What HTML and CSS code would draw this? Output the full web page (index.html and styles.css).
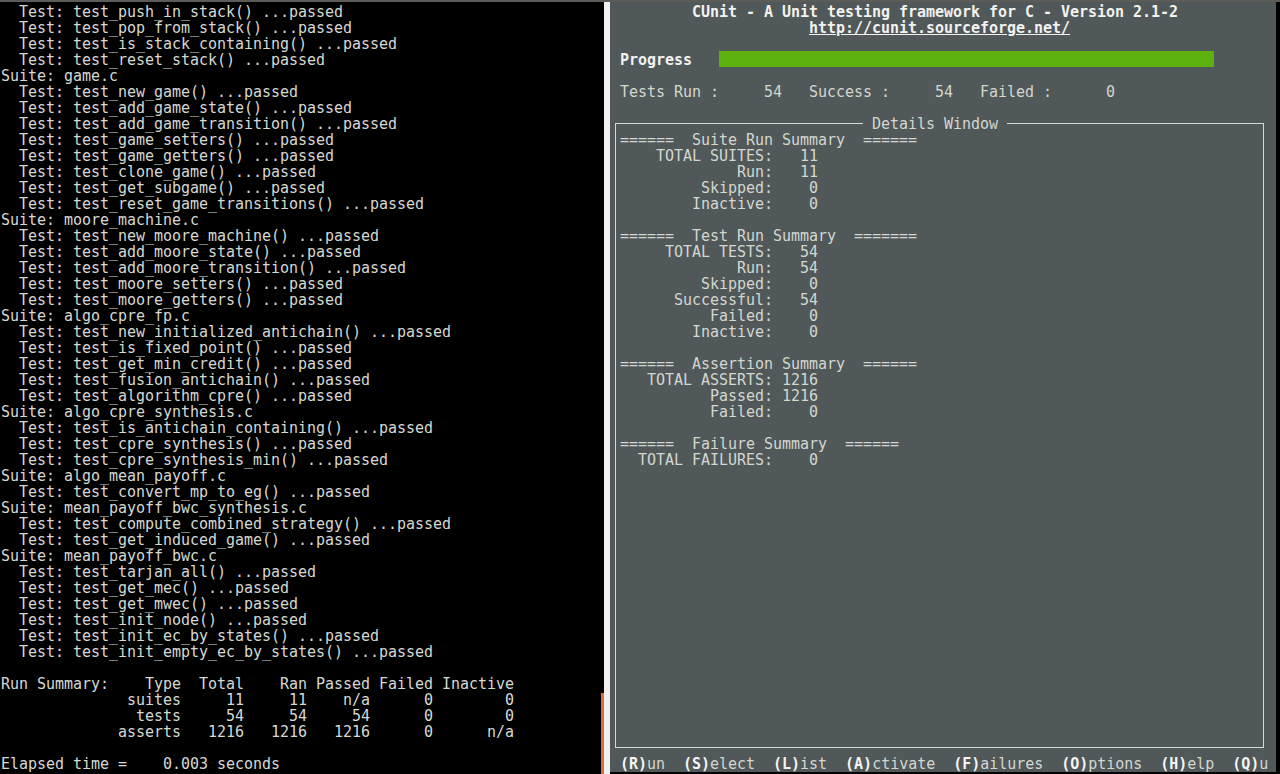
FILE: index.html
```html
<!DOCTYPE html>
<html>
<head>
<meta charset="utf-8">
<title>CUnit</title>
<link rel="stylesheet" href="styles.css">
</head>
<body>
<div class="topbar"></div>
<div class="main">
  <div class="left">
<pre class="term">  Test: test_push_in_stack() ...passed
  Test: test_pop_from_stack() ...passed
  Test: test_is_stack_containing() ...passed
  Test: test_reset_stack() ...passed
Suite: game.c
  Test: test_new_game() ...passed
  Test: test_add_game_state() ...passed
  Test: test_add_game_transition() ...passed
  Test: test_game_setters() ...passed
  Test: test_game_getters() ...passed
  Test: test_clone_game() ...passed
  Test: test_get_subgame() ...passed
  Test: test_reset_game_transitions() ...passed
Suite: moore_machine.c
  Test: test_new_moore_machine() ...passed
  Test: test_add_moore_state() ...passed
  Test: test_add_moore_transition() ...passed
  Test: test_moore_setters() ...passed
  Test: test_moore_getters() ...passed
Suite: algo_cpre_fp.c
  Test: test_new_initialized_antichain() ...passed
  Test: test_is_fixed_point() ...passed
  Test: test_get_min_credit() ...passed
  Test: test_fusion_antichain() ...passed
  Test: test_algorithm_cpre() ...passed
Suite: algo_cpre_synthesis.c
  Test: test_is_antichain_containing() ...passed
  Test: test_cpre_synthesis() ...passed
  Test: test_cpre_synthesis_min() ...passed
Suite: algo_mean_payoff.c
  Test: test_convert_mp_to_eg() ...passed
Suite: mean_payoff_bwc_synthesis.c
  Test: test_compute_combined_strategy() ...passed
  Test: test_get_induced_game() ...passed
Suite: mean_payoff_bwc.c
  Test: test_tarjan_all() ...passed
  Test: test_get_mec() ...passed
  Test: test_get_mwec() ...passed
  Test: test_init_node() ...passed
  Test: test_init_ec_by_states() ...passed
  Test: test_init_empty_ec_by_states() ...passed

Run Summary:    Type  Total    Ran Passed Failed Inactive
              suites     11     11    n/a      0        0
               tests     54     54     54      0        0
             asserts   1216   1216   1216      0      n/a

Elapsed time =    0.003 seconds</pre>
  </div>
  <div class="scroll"><div class="thumb"></div></div>
  <div class="divider"></div>
  <div class="right">
    <div class="header">
<pre class="line hi">         CUnit - A Unit testing framework for C - Version 2.1-2</pre>
<pre class="line hi">                      <u>http://cunit.sourceforge.net/</u></pre>
<pre class="line"> </pre>
<pre class="line"> <b class="hi">Progress</b>   <span class="bar"></span></pre>
<pre class="line"> </pre>
<pre class="line"> Tests Run :     54   Success :     54   Failed :      0</pre>
    </div>
    <div class="details">
      <span class="label"> Details Window </span>
<pre class="term">======  Suite Run Summary  ======
    TOTAL SUITES:   11
             Run:   11
         Skipped:    0
        Inactive:    0

======  Test Run Summary  =======
     TOTAL TESTS:   54
             Run:   54
         Skipped:    0
      Successful:   54
          Failed:    0
        Inactive:    0

======  Assertion Summary  ======
   TOTAL ASSERTS: 1216
          Passed: 1216
          Failed:    0

======  Failure Summary  ======
  TOTAL FAILURES:    0</pre>
    </div>
<pre class="line menu"> <b class="hi">(R)</b>un  <b class="hi">(S)</b>elect  <b class="hi">(L)</b>ist  <b class="hi">(A)</b>ctivate  <b class="hi">(F)</b>ailures  <b class="hi">(O)</b>ptions  <b class="hi">(H)</b>elp  <b class="hi">(Q)</b>u</pre>
  </div>
  <div class="edge"></div>
</div>
</body>
</html>
```
FILE: styles.css
```css
html, body {
  margin: 0;
  padding: 0;
}
body {
  width: 1280px;
  height: 774px;
  overflow: hidden;
  background: #000;
  font-family: "DejaVu Sans Mono", "Liberation Mono", monospace;
  font-size: 15px;
  line-height: 16px;
  letter-spacing: -0.03px;
}
pre {
  margin: 0;
  font: inherit;
  letter-spacing: inherit;
}
.topbar {
  height: 2px;
  background: #5b5b57;
}
.main {
  display: flex;
  align-items: flex-start;
  height: 772px;
}
.left {
  align-self: stretch;
  width: 600px;
  padding: 2px 0 0 1px;
  background: #000;
  color: #d6d9d2;
  overflow: hidden;
}
.scroll {
  align-self: stretch;
  width: 3px;
  display: flex;
  flex-direction: column;
  justify-content: flex-end;
}
.thumb {
  height: 81px;
  background: #e06a44;
}
.divider {
  align-self: stretch;
  width: 6px;
  background: #f2f1f0;
}
.right {
  width: 666px;
  height: 770px;
  box-sizing: border-box;
  padding: 1px 0 0 1px;
  background: #50585a;
  color: #d3d7cf;
}
.edge {
  align-self: stretch;
  width: 4px;
  background: #000;
}
.header {
  height: 111px;
  padding-top: 1px;
}
.line {
  height: 16px;
  white-space: pre;
}
.hi {
  color: #f2f2ef;
  font-weight: bold;
}
.bar {
  display: inline-block;
  vertical-align: top;
  margin-top: -1px;
  width: 495px;
  height: 16px;
  background: #5cb10e;
}
.details {
  position: relative;
  box-sizing: border-box;
  margin: 8px 0 7px 4px;
  width: 649px;
  height: 625px;
  border: 1px solid #d6dad6;
  padding: 8px 0 0 4px;
}
.label {
  position: absolute;
  top: -8px;
  left: 247px;
  height: 16px;
  white-space: pre;
  background: #50585a;
}
.menu {
  height: 16px;
  padding-top: 1px;
  box-sizing: border-box;
  overflow: visible;
}
.menu .hi {
  color: #f4f4f2;
}
```
